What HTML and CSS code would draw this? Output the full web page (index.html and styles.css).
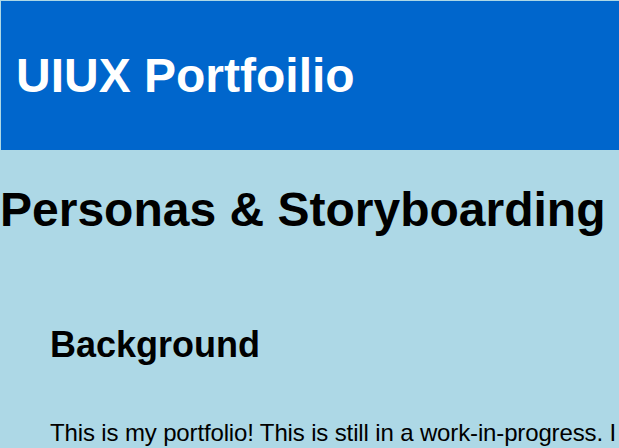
FILE: index.html
```html
<!DOCTYPE html>
<html lang="en">
<head>
<meta charset="utf-8">
<title>UIUX Portfoilio</title>
<link rel="stylesheet" href="styles.css">
</head>
<body>
<header class="site-header">
  <h1 class="site-title">UIUX Portfoilio</h1>
</header>
<main>
  <h1 class="page-title">Personas &amp; Storyboarding</h1>
  <section class="section">
    <h2 class="section-title">Background</h2>
    <p class="section-text">This is my portfolio! This is still in a work-in-progress. I</p>
  </section>
</main>
</body>
</html>
```
FILE: styles.css
```css
html, body {
  margin: 0;
  padding: 0;
}
body {
  background: #add8e6;
  font-family: "Liberation Sans", Arial, sans-serif;
  font-size: 24px;
  color: #000;
  overflow: hidden;
}
.site-header {
  margin: 1px 0 0 1px;
  padding: 15px;
  background: #0066cc;
}
.site-title {
  margin: 0.67em 0;
  font-size: 48px;
  font-weight: bold;
  color: #fff;
  white-space: nowrap;
}
.page-title {
  margin: 0.67em 0;
  font-size: 48px;
  font-weight: bold;
  white-space: nowrap;
}
.section {
  display: flex;
  flex-direction: column;
  padding: 24px 50px 0;
}
.section-title {
  margin: 30px 0 0;
  font-size: 36px;
  font-weight: bold;
}
.section-text {
  margin: 53px 0 0;
  font-size: 24px;
  letter-spacing: -0.14px;
  white-space: nowrap;
}
```
